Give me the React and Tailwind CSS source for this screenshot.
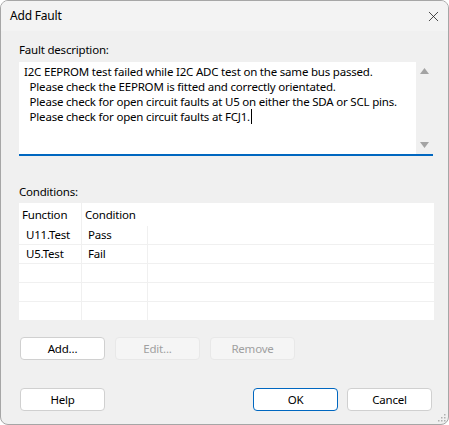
import { X } from "lucide-react";

const font = { fontFamily: '"Segoe UI", "Noto Sans", sans-serif' };

const lines = [
  "I2C EEPROM test failed while I2C ADC test on the same bus passed.",
  "  Please check the EEPROM is fitted and correctly orientated.",
  "  Please check for open circuit faults at U5 on either the SDA or SCL pins.",
  "  Please check for open circuit faults at FCJ1",
];

const rows = [
  ["U11.Test", "Pass"],
  ["U5.Test", "Fail"],
  ["", ""],
  ["", ""],
  ["", ""],
];

function Btn({ children, disabled, primary }) {
  return (
    <button
      type="button"
      disabled={disabled}
      className={[
        "h-[23px] w-[85px] rounded-[4px] border text-[11.5px] leading-none tracking-[-0.2px]",
        disabled
          ? "border-[#e8e8e8] bg-[#f5f5f5] text-[#a0a0a0]"
          : primary
          ? "border-[#0067c0] bg-white text-black"
          : "border-[#d0d0d0] bg-white text-black",
      ].join(" ")}
    >
      {children}
    </button>
  );
}

export default function App() {
  return (
    <div className="h-[425px] w-[449px] bg-white" style={font}>
      <div className="relative flex h-full w-full flex-col overflow-hidden rounded-[8px] border border-[#a6a6a6] bg-[#f0f0f0] text-[11.5px] tracking-[-0.2px]">
        {/* title bar */}
        <div className="flex h-[30px] shrink-0 items-center justify-between bg-[#f3f3f3] pl-[9px] pr-[6px]">
          <span className="text-[12px] tracking-[-0.2px] text-black">Add Fault</span>
          <X className="h-[17px] w-[17px] text-[#1a1a1a]" strokeWidth={1.1} />
        </div>

        <div className="flex flex-1 flex-col pl-[18px] pr-[15px]">
          <div className="mt-[11px] leading-[16px] text-black">Fault description:</div>
          <div className="mt-[4px] flex h-[94px] border-b-2 border-[#0067c0] bg-white">
            <div className="flex-1 pl-[5px] pt-[2px] leading-[15px] text-black">
              {lines.map((l, i) => (
                <div key={i} className="h-[15px] whitespace-pre">
                  {l}
                  {i === 3 && <span className="border-r border-black pr-[1px]">.</span>}
                </div>
              ))}
            </div>
            <div className="flex w-[17px] flex-col items-center justify-between bg-[#f0f0f0] py-[6px]">
              <svg width="9" height="6" viewBox="0 0 9 6"><path d="M4.5 0L9 6H0z" fill="#a3a3a3" /></svg>
              <svg width="9" height="6" viewBox="0 0 9 6"><path d="M0 0h9L4.5 6z" fill="#a3a3a3" /></svg>
            </div>
          </div>

          <div className="mt-[28px] leading-[16px] text-black">Conditions:</div>
          <div className="mr-[-1px] mt-[3px] h-[118px] bg-white text-black">
            <div className="flex h-[23px] items-center">
              <div className="flex h-full w-[63px] items-center border-r border-[#f0f0f0] pl-[3px]">Function</div>
              <div className="pl-[3px]">Condition</div>
            </div>
            {rows.map((r, i) => (
              <div key={i} className="flex h-[19px] border-b border-[#f0f0f0]">
                <div className="flex w-[63px] items-center border-r border-[#f0f0f0] pl-[7px]">{r[0]}</div>
                <div className="flex w-[66px] items-center border-r border-[#f0f0f0] pl-[6px]">{r[1]}</div>
                <div className="flex-1" />
              </div>
            ))}
          </div>

          <div className="mt-[16px] flex gap-[10px] pl-[1px]">
            <Btn>Add...</Btn>
            <Btn disabled>Edit...</Btn>
            <Btn disabled>Remove</Btn>
          </div>

          <div className="mt-[28px] flex items-center pl-[1px] pr-[1px]">
            <Btn>Help</Btn>
            <div className="flex-1" />
            <div className="flex gap-[9px]">
              <Btn primary>OK</Btn>
              <Btn>Cancel</Btn>
            </div>
          </div>
        </div>

        {/* size grip */}
        <svg className="absolute bottom-[2px] right-[2px]" width="8" height="8" viewBox="0 0 8 8">
          <rect x="6" y="0" width="1.5" height="1.5" fill="#b0b0b0" />
          <rect x="3" y="3" width="1.5" height="1.5" fill="#b0b0b0" />
          <rect x="6" y="3" width="1.5" height="1.5" fill="#b0b0b0" />
          <rect x="0" y="6" width="1.5" height="1.5" fill="#b0b0b0" />
          <rect x="3" y="6" width="1.5" height="1.5" fill="#b0b0b0" />
          <rect x="6" y="6" width="1.5" height="1.5" fill="#b0b0b0" />
        </svg>
      </div>
    </div>
  );
}
